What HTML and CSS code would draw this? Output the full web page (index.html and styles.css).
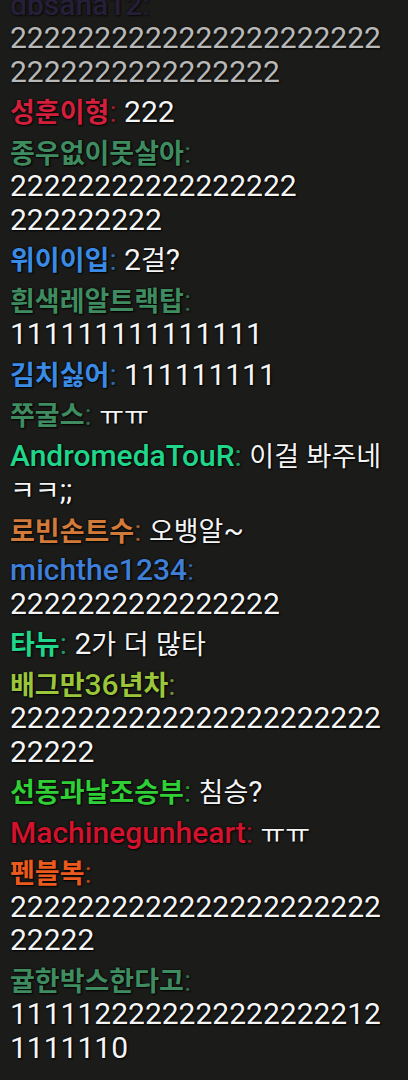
FILE: index.html
```html
<!DOCTYPE html>
<html lang="ko">
<head>
<meta charset="utf-8">
<title>Chat</title>
<link rel="stylesheet" href="styles.css">
</head>
<body>
<div class="chat">
  <div class="msg fading"><span class="name c-purple">dbsaha12<span class="colon">:</span></span> <span class="text">22222222222222222222222222222222222222</span></div>
  <div class="msg"><span class="name c-crimson"><span class="ko">성훈이형</span><span class="colon">:</span></span> <span class="text">222</span></div>
  <div class="msg"><span class="name c-sage"><span class="ko">종우없이못살아</span><span class="colon">:</span></span> <span class="text">22222222222222222 222222222</span></div>
  <div class="msg"><span class="name c-blue"><span class="ko">위이이입</span><span class="colon">:</span></span> <span class="text">2<span class="ko">걸</span>?</span></div>
  <div class="msg"><span class="name c-sage"><span class="ko">흰색레알트랙탑</span><span class="colon">:</span></span> <span class="text">111111111111111</span></div>
  <div class="msg"><span class="name c-blue"><span class="ko">김치싫어</span><span class="colon">:</span></span> <span class="text">111111111</span></div>
  <div class="msg"><span class="name c-sage"><span class="ko">쭈굴스</span><span class="colon">:</span></span> <span class="text"><span class="ko">ㅠㅠ</span></span></div>
  <div class="msg"><span class="name c-mint">AndromedaTouR<span class="colon">:</span></span> <span class="text"><span class="ko">이걸 봐주네 ㅋㅋ</span>;;</span></div>
  <div class="msg"><span class="name c-orange"><span class="ko">로빈손트수</span><span class="colon">:</span></span> <span class="text"><span class="ko">오뱅알</span>~</span></div>
  <div class="msg"><span class="name c-steel">michthe1234<span class="colon">:</span></span> <span class="text">2222222222222222</span></div>
  <div class="msg"><span class="name c-mint"><span class="ko">타뉴</span><span class="colon">:</span></span> <span class="text">2<span class="ko">가 더 많타</span></span></div>
  <div class="msg"><span class="name c-lime"><span class="ko">배그만</span>36<span class="ko">년차</span><span class="colon">:</span></span> <span class="text">222222222222222222222222222</span></div>
  <div class="msg"><span class="name c-green"><span class="ko">선동과날조승부</span><span class="colon">:</span></span> <span class="text"><span class="ko">침승</span>?</span></div>
  <div class="msg"><span class="name c-red">Machinegunheart<span class="colon">:</span></span> <span class="text"><span class="ko">ㅠㅠ</span></span></div>
  <div class="msg"><span class="name c-vermilion"><span class="ko">펜블복</span><span class="colon">:</span></span> <span class="text">222222222222222222222222222</span></div>
  <div class="msg"><span class="name c-sage"><span class="ko">귤한박스한다고</span><span class="colon">:</span></span> <span class="text">11111222222222222222121111110</span></div>
</div>
</body>
</html>
```
FILE: styles.css
```css
html, body {
  margin: 0;
  padding: 0;
  background: #1b1c1a;
}

.chat {
  box-sizing: border-box;
  width: 408px;
  height: 1080px;
  overflow: hidden;
  display: flex;
  flex-direction: column;
  justify-content: flex-end;
  padding: 0 13px 16px 10px;
  font-family: Roboto, "Noto Sans CJK KR", sans-serif;
  font-size: 30px;
  line-height: 33.5px;
  color: #f5f5f5;
  text-shadow: 0 0 2px #000, 1px 1px 2px rgba(0, 0, 0, 0.9);
}

.msg {
  margin-top: 6px;
  overflow-wrap: break-word;
  flex-shrink: 0;
}

.fading {
  opacity: 0.72;
}

.ko {
  font-family: "Noto Sans CJK KR", sans-serif;
  font-size: 27px;
}

.name {
  font-weight: 500;
}

.name .ko {
  font-weight: 700;
}

.colon {
  opacity: 0.7;
  font-weight: 400;
}

.text {
  font-weight: 400;
}

.c-purple { color: #2c2046; }
.c-crimson { color: #d21f3c; }
.c-sage { color: #3f8c60; }
.c-blue { color: #3a8be6; }
.c-mint { color: #20d68a; }
.c-orange { color: #d27a3a; }
.c-steel { color: #3f7fd8; }
.c-lime { color: #9cc63a; }
.c-green { color: #30cf35; }
.c-red { color: #d3132d; }
.c-vermilion { color: #ea5a1e; }
```
